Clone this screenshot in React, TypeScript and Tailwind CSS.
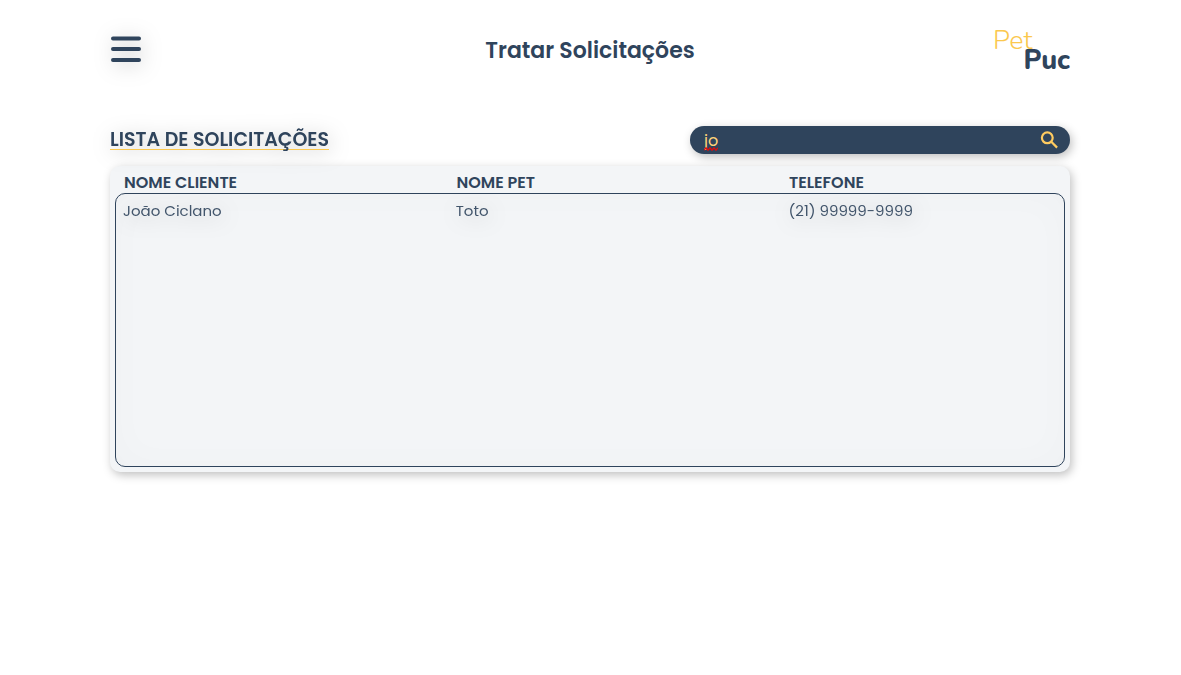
import { useState } from "react";

const requests = [{ client: "João Ciclano", pet: "Toto", phone: "(21) 99999-9999" }];
const columns = ["NOME CLIENTE", "NOME PET", "TELEFONE"];

function Header() {
  return (
    <header className="grid h-[98px] grid-cols-3 items-center">
      <button type="button" aria-label="Menu" className="w-8 justify-self-start drop-shadow-[2px_3px_10px_rgba(0,0,0,0.25)]">
        <svg viewBox="0 0 32 28" className="block h-7 w-8" stroke="#2f445c" strokeWidth="4" strokeLinecap="round">
          <path d="M3 3.5H29M3 14H29M3 25H29" />
        </svg>
      </button>
      <h1 className="pt-1 text-center text-[22px] font-semibold leading-8 whitespace-nowrap">Tratar Solicitações</h1>
      <a href="#" aria-label="Pet Puc" className="flex w-[77px] flex-col justify-self-end pt-1 font-[Nunito,Inter,sans-serif] text-[27px] leading-5">
        <span className="font-light text-[#fbc84e]">Pet</span>
        <span className="self-end font-extrabold">Puc</span>
      </a>
    </header>
  );
}

function Search({ value, onChange }: { value: string; onChange: (v: string) => void }) {
  return (
    <label className="relative flex h-7 w-[380px] items-center rounded-full bg-[#2f445c] pr-3 pl-3.5 shadow-[2px_3px_10px_rgba(0,0,0,0.25)]">
      <input
        type="text"
        aria-label="Buscar solicitação"
        value={value}
        onChange={(e) => onChange(e.target.value)}
        className="min-w-0 flex-1 bg-transparent pt-0.5 text-base leading-6 text-[#ffd479] outline-none"
      />
      {value === "jo" && (
        <svg viewBox="0 0 14 4" className="absolute top-[21px] left-3.5 h-1 w-3.5" fill="none" stroke="#e00b0b" strokeWidth="1.3">
          <path d="M0 3.2L2 0.8L4 3.2L6 0.8L8 3.2L10 0.8L12 3.2L14 0.8" />
        </svg>
      )}
      <svg viewBox="0 0 18 18" className="size-[18px]" fill="none" stroke="#ffcb60" strokeWidth="2.2">
        <circle cx="7.3" cy="6.8" r="5.4" />
        <path d="M11.3 10.8L17.1 16.6" />
      </svg>
    </label>
  );
}

export default function App() {
  const [query, setQuery] = useState("jo");
  const rows = requests.filter((r) => r.client.toLowerCase().includes(query.toLowerCase()));

  return (
    <div className="min-h-screen bg-white pr-px font-[Poppins,Inter,sans-serif] text-[#2f445c]">
      <div className="mx-auto max-w-[960px]">
        <Header />
        <main className="pt-7">
          <div className="flex items-start justify-between">
            <h2 className="border-b border-[#fbc84e] pt-1 text-[19px] leading-[19px] font-semibold drop-shadow-[2px_3px_10px_rgba(0,0,0,0.25)]">
              LISTA DE SOLICITAÇÕES
            </h2>
            <Search value={query} onChange={setQuery} />
          </div>
          <section className="mt-3 rounded-[10px] bg-[#f3f5f7] p-[5px] shadow-[2px_3px_10px_rgba(0,0,0,0.25)]">
            <table className="block text-left">
              <thead className="block">
                <tr className="grid grid-cols-[35%_35%_30%]">
                  {columns.map((c) => (
                    <th key={c} className="pt-px pl-[9px] text-base leading-[21px] font-semibold">{c}</th>
                  ))}
                </tr>
              </thead>
              <tbody className="block h-[274px] overflow-y-auto rounded-[10px] border border-[#2f445c] pt-1 shadow-[inset_0_0_40px_rgba(0,0,0,0.02)]">
                {rows.map((r) => (
                  <tr key={r.client} className="grid grid-cols-[35.1%_35.1%_29.8%] text-[15px] leading-[26px] text-[#2f445c]/90 drop-shadow-[2px_3px_10px_rgba(0,0,0,0.25)]">
                    <td className="pl-[7px]">{r.client}</td>
                    <td className="pl-[7px]">{r.pet}</td>
                    <td className="pl-[7px]">{r.phone}</td>
                  </tr>
                ))}
              </tbody>
            </table>
          </section>
        </main>
      </div>
    </div>
  );
}
